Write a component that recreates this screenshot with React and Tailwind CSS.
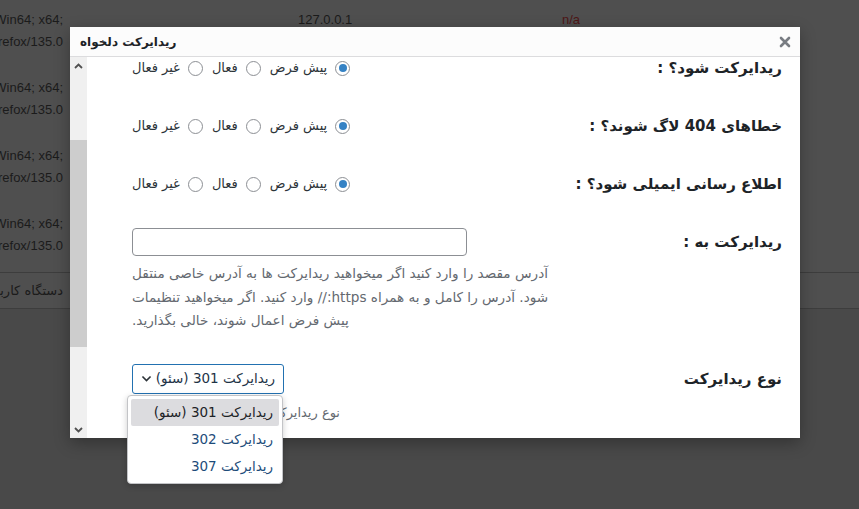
import React from 'react';

const rows = [
  { a: 'Win64; x64;', b: 'Firefox/135.0', ip: '127.0.0.1', st: 'n/a' },
  { a: 'Win64; x64;', b: 'Firefox/135.0' },
  { a: 'Win64; x64;', b: 'Firefox/135.0' },
  { a: 'Win64; x64;', b: 'Firefox/135.0' },
];

const Radio = ({ checked }) => (
  <span className="w-[15px] h-[15px] rounded-full border border-[#8c8f94] bg-white flex items-center justify-center shrink-0">
    {checked && <span className="w-[8px] h-[8px] rounded-full bg-[#3582c4]" />}
  </span>
);

const RadioGroup = () => (
  <div dir="rtl" className="flex items-center gap-[9px] text-[13px] text-[#2c3338]">
    <label className="flex items-center gap-[8px]"><Radio checked />پیش فرض</label>
    <label className="flex items-center gap-[8px]"><Radio />فعال</label>
    <label className="flex items-center gap-[8px]"><Radio />غیر فعال</label>
  </div>
);

const Label = ({ children }) => (
  <div dir="rtl" className="w-[248px] pr-[18px] text-right text-[15px] font-bold text-[#1d2327]">{children}</div>
);

export default function App() {
  return (
    <div className="relative w-[859px] h-[509px] overflow-hidden bg-[#494949] font-['DejaVu_Sans',sans-serif]">
      {/* page behind the overlay */}
      <div className="bg-[#4f4f4f] text-[13px] text-[#1b1b1b]">
        {rows.map((r, i) => (
          <div key={i} className="flex h-[68px] pt-[9px] leading-[22px] font-['Liberation_Sans',sans-serif]">
            <div dir="rtl" className="w-[63px] shrink-0 whitespace-nowrap">
              <div><span dir="ltr">{r.a}</span></div>
              <div><span dir="ltr">{r.b}</span></div>
            </div>
            <div className="w-[235px] shrink-0" />
            <div className="w-[264px] shrink-0">{r.ip}</div>
            <div className="text-[#4e1616]">{r.st}</div>
          </div>
        ))}
        <div className="flex h-[37px] items-center border-y border-[#3d3d3d]">
          <div dir="rtl" className="w-[63px] shrink-0 whitespace-nowrap">دستگاه کاربر</div>
        </div>
      </div>

      {/* modal */}
      <div className="absolute left-[70px] top-[27px] w-[730px] h-[411px] bg-white shadow-[0_5px_15px_rgba(0,0,0,0.3)] flex flex-col overflow-hidden">
        <div className="h-[30px] shrink-0 border-b border-[#dcdcde] bg-[#fcfcfc] flex items-center justify-between pl-[10px] pr-[9px]">
          <span dir="rtl" className="text-[12px] font-bold text-[#1d2327]">ریدایرکت دلخواه</span>
          <svg width="12" height="12" viewBox="0 0 12 12">
            <path d="M2 2L10 10M10 2L2 10" stroke="#787c82" strokeWidth="2.6" strokeLinecap="round" />
          </svg>
        </div>

        <div className="flex-1 flex min-h-0">
          {/* scrollbar */}
          <div className="w-[17px] shrink-0 bg-[#f0f0f0] flex flex-col">
            <div className="h-[17px] flex items-center justify-center">
              <svg width="9" height="6" viewBox="0 0 9 6"><path d="M1 5L4.5 1.5L8 5" fill="none" stroke="#505050" strokeWidth="1.8" /></svg>
            </div>
            <div className="flex-1">
              <div className="mt-[66px] h-[207px] bg-[#cdcdcd]" />
            </div>
            <div className="h-[17px] flex items-center justify-center">
              <svg width="9" height="6" viewBox="0 0 9 6"><path d="M1 1L4.5 4.5L8 1" fill="none" stroke="#505050" strokeWidth="1.8" /></svg>
            </div>
          </div>

          {/* content */}
          <div className="flex-1 overflow-hidden">
            <div className="-mt-[18px]">
              <div className="flex h-[58px] items-center">
                <div className="w-[465px] pl-[45px] flex"><RadioGroup /></div>
                <Label>ریدایرکت شود؟ :</Label>
              </div>
              <div className="flex h-[58px] items-center">
                <div className="w-[465px] pl-[45px] flex"><RadioGroup /></div>
                <Label>خطاهای 404 لاگ شوند؟ :</Label>
              </div>
              <div className="flex h-[58px] items-center">
                <div className="w-[465px] pl-[45px] flex"><RadioGroup /></div>
                <Label>اطلاع رسانی ایمیلی شود؟ :</Label>
              </div>

              <div className="flex items-start pt-[15px]">
                <div className="w-[465px] pl-[45px]">
                  <div className="w-[335px] h-[28px] border border-[#8c8f94] rounded-[4px] bg-white" />
                  <p dir="rtl" className="mt-[6px] w-[420px] text-left text-[13.6px] leading-[23.5px] text-[#646970]">
                    آدرس مقصد را وارد کنید اگر میخواهید ریدایرکت ها به آدرس خاصی منتقل شود. آدرس را کامل و به همراه https:// وارد کنید. اگر میخواهید تنظیمات پیش فرض اعمال شوند، خالی بگذارید.
                  </p>
                </div>
                <div className="h-[28px] flex items-center"><Label>ریدایرکت به :</Label></div>
              </div>

              <div className="flex items-start pt-[31px]">
                <div className="w-[465px] pl-[45px]">
                  <div dir="rtl" className="w-[152px] h-[30px] border border-[#2271b1] rounded-[3px] bg-white flex items-center justify-between pr-[8px] pl-[7px] text-[13.5px] whitespace-nowrap text-[#1e3347]">
                    <span>ریدایرکت 301 (سئو)</span>
                    <svg width="13" height="13" viewBox="0 0 16 16"><path d="M3 5.5L8 10.5L13 5.5" fill="none" stroke="#2c3338" strokeWidth="2" /></svg>
                  </div>
                  <div dir="rtl" className="mt-[9px] w-[208px] overflow-hidden whitespace-nowrap text-[13px] leading-[20px] text-[#646970]">
                    نوع ریدایرکت را انتخاب کنید
                  </div>
                </div>
                <div className="h-[32px] flex items-center"><Label>نوع ریدایرکت</Label></div>
              </div>
            </div>
          </div>
        </div>
      </div>

      {/* open select menu */}
      <div dir="rtl" className="absolute left-[127px] top-[395px] w-[156px] bg-white border border-[#c3c4c7] rounded-[4px] shadow-[0_2px_6px_rgba(0,0,0,0.2)] p-[3px] text-[13.5px] whitespace-nowrap">
        <div className="h-[27px] flex items-center pr-[6px] rounded-[2px] bg-[#dcdcdf] text-[#1d2327]">ریدایرکت 301 (سئو)</div>
        <div className="h-[27px] flex items-center pr-[6px] text-[#1d4c7a]">ریدایرکت 302</div>
        <div className="h-[27px] flex items-center pr-[6px] text-[#1d4c7a]">ریدایرکت 307</div>
      </div>
    </div>
  );
}
